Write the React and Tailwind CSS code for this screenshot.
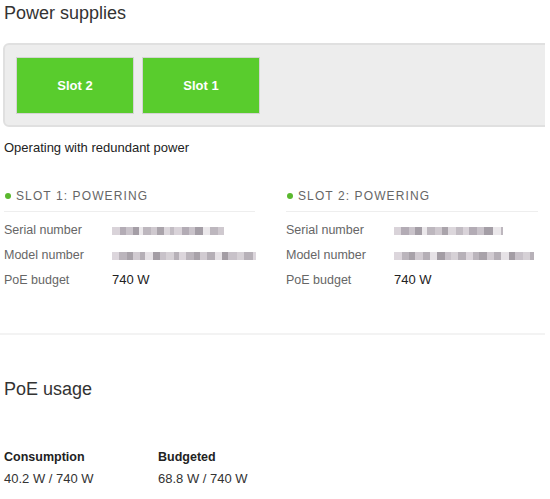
const Blur = ({ widths, colors }) => (
  <div className="flex h-[8px] items-stretch">
    {widths.map((w, i) => (
      <div key={i} style={{ width: w, background: colors[i % colors.length] }} />
    ))}
  </div>
);

const serialColors = ["#d9d3d9","#b3acb5","#c9c3ca","#a49ea6","#ebe8eb","#bdb7be","#cfc9cf","#aaa4ab","#dcd7dc","#c2bcc3"];
const modelColors = ["#dcd6dc","#bbb5bc","#a8a2a9","#d1cbd1","#b5afb6","#e6e2e6","#a39da4","#c8c2c9","#d6d1d6","#b7b1b8"];

function Slot({ n, serialW, modelW, width, lineW }) {
  return (
    <div style={{ width }}>
      <div className="flex items-center gap-[5px] pl-[1px] h-[16px]">
        <span className="w-[6px] h-[6px] rounded-full bg-[#5ab82e]" />
        <span className="text-[12px] tracking-[1.1px] text-[#666]">SLOT {n}: POWERING</span>
      </div>
      <div className="mt-[7px] h-px bg-[#eeeeee]" style={{ width: lineW }} />
      <div className="text-[12.5px] text-[#666]">
        <div className="flex items-center h-[25px] mt-[6px]">
          <span className="w-[108px]">Serial number</span>
          <Blur widths={serialW} colors={serialColors} />
        </div>
        <div className="flex items-center h-[25px]">
          <span className="w-[108px]">Model number</span>
          <Blur widths={modelW} colors={modelColors} />
        </div>
        <div className="flex items-center h-[24px]">
          <span className="w-[108px]">PoE budget</span>
          <span className="text-[#222] text-[13px]">740 W</span>
        </div>
      </div>
    </div>
  );
}

export default function App() {
  return (
    <div className="w-[545px] overflow-hidden bg-white" style={{ fontFamily: '"Liberation Sans", Arial, sans-serif' }}>
      <div className="pl-[4px] pt-[2px] h-[43px] text-[18px] text-[#333] leading-[22px]">Power supplies</div>
      <div className="ml-[3px] w-[560px] h-[84px] rounded-[6px] border-2 border-[#e0e0e0] bg-[#ededed] flex gap-[8px] pl-[11px] pt-[12px]">
        <div className="w-[118px] h-[57px] bg-[#59cc2d] border border-[#d4d4d4] flex items-center justify-center text-white text-[13px] font-bold">Slot 2</div>
        <div className="w-[118px] h-[57px] bg-[#59cc2d] border border-[#d4d4d4] flex items-center justify-center text-white text-[13px] font-bold">Slot 1</div>
      </div>
      <div className="pl-[4px] mt-[14px] text-[13px] leading-[14px] text-[#222]">Operating with redundant power</div>
      <div className="flex pl-[4px] mt-[33px]">
        <Slot n={1} width={282} lineW={251}
          serialW={[8,6,7,6,4,8,6,7,6,4,8,7,6,8,7,8,6]}
          modelW={[7,8,6,7,5,8,7,6,8,5,7,8,6,7,8,7,6,9,7,9,3]} />
        <Slot n={2} width={252} lineW={252}
          serialW={[7,8,6,7,5,8,7,6,8,7,6,8,7,9,8,2]}
          modelW={[8,7,6,8,7,7,8,6,7,8,7,6,8,7,7,8,6,8,7,4]} />
      </div>
      <div className="mt-[41px] h-[2px] bg-[#f3f3f3]" />
      <div className="pl-[4px] mt-[43px] text-[18px] leading-[22px] text-[#333]">PoE usage</div>
      <div className="flex pl-[4px] mt-[50px] text-[12.5px] text-[#222]">
        <div className="w-[154px]">
          <div className="font-bold leading-[14px]">Consumption</div>
          <div className="mt-[8px] leading-[14px] text-[13px] text-[#333]">40.2 W / 740 W</div>
        </div>
        <div>
          <div className="font-bold leading-[14px]">Budgeted</div>
          <div className="mt-[8px] leading-[14px] text-[13px] text-[#333]">68.8 W / 740 W</div>
        </div>
      </div>
      <div className="h-[14px]" />
    </div>
  );
}
